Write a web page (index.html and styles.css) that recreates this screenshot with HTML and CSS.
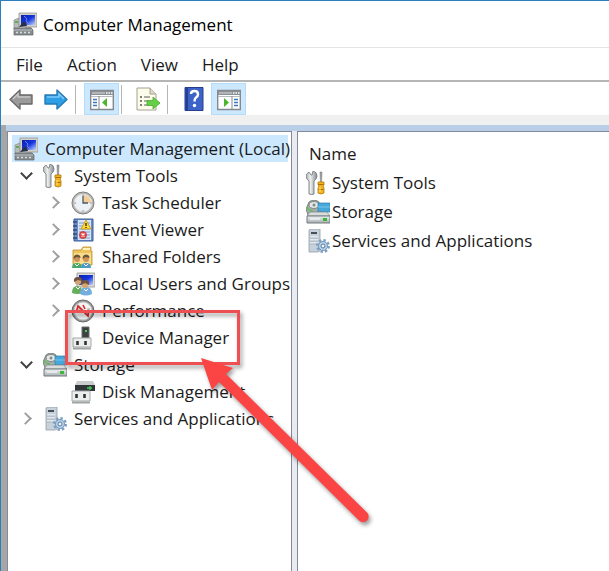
FILE: index.html
```html
<!DOCTYPE html>
<html lang="en">
<head>
    <meta charset="UTF-8">
    <meta name="viewport" content="width=device-width, initial-scale=1.0">
    <title>Computer Management</title>
    <link rel="stylesheet" href="styles.css">
</head>
<body>

<!-- Shared icons -->
<svg class="icon-defs" aria-hidden="true">
    <defs>
        <linearGradient id="metal" x1="0" x2="1">
            <stop offset="0" stop-color="#a9aeb0"/><stop offset=".4" stop-color="#eef0f0"/><stop offset="1" stop-color="#858b8e"/>
        </linearGradient>
        <linearGradient id="screen" x1="0" x2="1" y2="1">
            <stop offset="0" stop-color="#0a1fae"/><stop offset=".5" stop-color="#1534dc"/><stop offset="1" stop-color="#c4d6ff"/>
        </linearGradient>
        <linearGradient id="drive" x1="0" x2="0" y1="0" y2="1">
            <stop offset="0" stop-color="#f1f3f3"/><stop offset="1" stop-color="#a6adaf"/>
        </linearGradient>
    </defs>
    <symbol id="icon-computer" viewBox="0 0 24 24">
        <path d="M1 8l5-2v11H1z" fill="#b8bdb8" stroke="#858b86" stroke-width=".7"/>
        <path d="M2 10h3" stroke="#44a33c" stroke-width="1.5"/>
        <path d="M6 1h18v14H6z" fill="#d3d1c8" stroke="#98978f" stroke-width=".8"/>
        <path d="M8 3h14v10H8z" fill="url(#screen)"/>
        <path d="M11 4l3 3-1 2 3 3" stroke="#6f86e8" stroke-width="1" fill="none"/>
        <path d="M6 15l4-5 2-1 2 5z" fill="#26304c"/>
        <path d="M12 15h6l2 3h-9z" fill="#aaa99f"/>
        <path d="M1 16h17l2 2v5H1z" fill="#878c8e" stroke="#5f6567" stroke-width=".7"/>
        <path d="M1 18h18" stroke="#b8bdbe"/>
        <path d="M3 20.5h2m2 0h2m2 0h2m2 0h2" stroke="#d8dcdc" stroke-width="1.6"/>
    </symbol>
    <symbol id="icon-tools" viewBox="0 0 24 24">
        <path d="M3 1l2 3h1l1-4q4 1 4 5 0 3-3 5v13q-2 1-5 0V10Q0 8 0 5q0-2 3-4z" fill="url(#metal)" stroke="#777d80" stroke-width=".9"/>
        <path d="M14 1h2l-.4 10h-1.2z" fill="#9aa0a2" stroke="#777" stroke-width=".5"/>
        <path d="M12 11h6v3l-1 1 1 2v5q-3 2-6 0v-5l1-2-1-1z" fill="#f4b41c" stroke="#b17a0b" stroke-width=".8"/>
        <path d="M12.500 13.500h5m-5 5h5" stroke="#a76e00"/>
        <path d="M14 16v5" stroke="#ffe58a"/>
    </symbol>
    <symbol id="icon-clock" viewBox="0 0 24 24">
        <circle cx="12" cy="12" r="11" fill="#b5b5b3" stroke="#828282" stroke-width="1"/>
        <circle cx="12" cy="12" r="8.800" fill="#edf2f7" stroke="#dedede" stroke-width="1"/>
        <path d="M12 12V4a8 8 0 0 1 8 8z" fill="#f3cd91"/>
        <path d="M12 5v7h5" stroke="#475970" stroke-width="1.300" fill="none"/>
        <path d="M12 3.500v1.500m0 14v1.500M3.500 12H5m14 0h1.500" stroke="#7f8994"/>
    </symbol>
    <symbol id="icon-events" viewBox="0 0 24 24">
        <path d="M3 1h19v22H3z" fill="#6b8fc8" stroke="#3d5e99"/>
        <path d="M7 2h13v20H7z" fill="#d9e5f6"/>
        <path d="M8 5h11M8 8h11M8 11h11M8 14h11M8 17h11M8 20h11" stroke="#7d9bd0"/>
        <path d="M2 4h4M2 8h4M2 12h4M2 16h4M2 20h4" stroke="#344a72" stroke-width="1.500"/>
        <path d="M15 2l5 9H10z" fill="#ffd92f" stroke="#c79a06" stroke-width=".8"/>
        <path d="M15 5v3m0 1v1" stroke="#222" stroke-width="1.300"/>
        <circle cx="12" cy="17" r="3.600" fill="#e44848" stroke="#b82c2c" stroke-width=".6"/>
        <path d="M10.500 15.500l3 3m0-3l-3 3" stroke="#fff" stroke-width="1.200"/>
    </symbol>
    <symbol id="icon-folders" viewBox="0 0 24 24">
        <path d="M2 5h8l2-3h8v4h1v14H2z" fill="#efc35d" stroke="#bd8e2b" stroke-width=".8"/>
        <path d="M3 8h17v11H3z" fill="#f9dd8d"/>
        <path d="M12 3h7v2h-7z" fill="#fff2be"/>
        <path d="M1 23q0-5 5-5t5 5z" fill="#45aa69"/>
        <path d="M10 23q0-5 5-5t5 5z" fill="#499ac7"/>
        <circle cx="6" cy="14" r="3" fill="#ce925d"/>
        <circle cx="15" cy="14" r="3" fill="#ce925d"/>
        <path d="M2.500 14q0-4.500 3.500-4.500t3.500 3.500l-4-1zm9 0q0-4.500 3.500-4.500t3.500 3.500l-4-1z" fill="#6d5538"/>
        <path d="M4 19l2 2 2-2m5 0l2 2 2-2" stroke="#fff" fill="none"/>
    </symbol>
    <symbol id="icon-users" viewBox="0 0 24 24">
        <path d="M6 1h18v14H6z" fill="#dcdcd4" stroke="#92938e" stroke-width=".8"/>
        <path d="M8 3h14v10H8z" fill="url(#screen)"/>
        <path d="M1 21q0-7 5-7t6 7q-6 2-11 0z" fill="#67ae5b"/>
        <path d="M9 22q0-7 6-7t6 7q-6 3-12 0z" fill="#74aede"/>
        <circle cx="7" cy="9.500" r="3.300" fill="#d6a474"/>
        <circle cx="14" cy="12.500" r="3.400" fill="#d6a474"/>
        <path d="M3 10q-1-5 4-5t4 4L7 8zm7 3q-1-5 4-5t4 5l-4-2z" fill="#6e5440"/>
        <path d="M5 15l2 2 2-2m4 2l2 2 2-2" stroke="#fff" fill="none"/>
    </symbol>
    <symbol id="icon-performance" viewBox="0 0 24 24">
        <circle cx="12" cy="12" r="11" fill="#959595" stroke="#6c6c6c"/>
        <circle cx="12" cy="12" r="9" fill="#f2f3f3" stroke="#c6c6c6"/>
        <path d="M5 13h3V7l9 9v-6h2" stroke="#b8babc" stroke-width="1.500" fill="none"/>
        <path d="M5.500 12l1.500-5 10 10 1-6" stroke="#dd2020" stroke-width="1.600" fill="none"/>
        <path d="M12 6l2 4" stroke="#dd2020" stroke-width="1.500" fill="none"/>
    </symbol>
    <symbol id="icon-device" viewBox="0 0 24 24">
        <path d="M11 1h7v11h-7z" fill="#3d4142" stroke="#696d6e"/>
        <path d="M14 5h2" stroke="#4ed35f" stroke-width="2"/>
        <path d="M2 12h18v9H2z" fill="#eceeee" stroke="#a5a8a8"/>
        <path d="M2 22.500h18" stroke="#a0a4a4" stroke-width="2"/>
        <path d="M6.500 15v4m8-4v4" stroke="#333" stroke-width="2.600"/>
    </symbol>
    <symbol id="icon-storage" viewBox="0 0 24 24">
        <path d="M3 2q5-4 10 0l1 9-4 4H2L0 9z" fill="#a3adac" stroke="#69716f" stroke-width=".8"/>
        <ellipse cx="8" cy="5" rx="5" ry="3.500" fill="#e4e8e6" stroke="#808886"/>
        <circle cx="8" cy="5" r="1.500" fill="#828986"/>
        <path d="M1 7q2 4 6 4" stroke="#61bf50" stroke-width="1.500" fill="none"/>
        <path d="M12 3h12v9H12z" fill="#46a9dc" stroke="#347da5" stroke-width=".7"/>
        <path d="M12 7h12" stroke="#84ceef" stroke-width=".8"/>
        <path d="M4 12h17l3 4H1z" fill="#d9dddd" stroke="#7d8585" stroke-width=".7"/>
        <path d="M1 16h23v7H1z" fill="url(#drive)" stroke="#737b7c"/>
        <path d="M17 18h4v3h-4z" fill="#39b83c"/>
        <path d="M4 19h10" stroke="#fff"/>
    </symbol>
    <symbol id="icon-disk" viewBox="0 0 24 24">
        <path d="M6 1h16l2 4H4z" fill="#c9cdcd"/>
        <path d="M4 5h20v6H4z" fill="#303637"/>
        <path d="M16 8h5m-2-2v4" stroke="#46c957" stroke-width="1.300"/>
        <path d="M1 11h18v10H1z" fill="#eceeee" stroke="#a5a8a8"/>
        <path d="M1 22.500h18" stroke="#a0a4a4" stroke-width="2"/>
        <path d="M5.500 14v4m8-4v4" stroke="#333" stroke-width="2.600"/>
    </symbol>
    <symbol id="icon-services" viewBox="0 0 24 24">
        <path d="M3 1l2-1h9v22l-2 1H3z" fill="#c7d1db" stroke="#929faa" stroke-width=".8"/>
        <path d="M5 3h6v2H5z" fill="#444f58"/>
        <path d="M4 8h8M4 11h8M4 14h8" stroke="#fff"/>
        <path d="M4 9h8M4 12h8M4 15h8" stroke="#909eac" stroke-width=".6"/>
        <circle cx="17" cy="17" r="5.800" fill="none" stroke="#7f9fc2" stroke-width="2.400" stroke-dasharray="2.500 2"/>
        <circle cx="17" cy="17" r="4.500" fill="#b8d2eb" stroke="#7296ba"/>
        <circle cx="17" cy="17" r="2" fill="#f0f6fb" stroke="#58799d"/>
    </symbol>
</svg>

<div class="window">

    <header class="title-bar">
        <svg class="icon" aria-hidden="true"><use href="#icon-computer"/></svg>
        <h1>Computer Management</h1>
    </header>

    <nav class="menu-bar" aria-label="Menu">
        <button type="button">File</button>
        <button type="button">Action</button>
        <button type="button">View</button>
        <button type="button">Help</button>
    </nav>

    <!-- Toolbar -->
    <div class="toolbar" role="toolbar" aria-label="Tools">
        <button type="button" aria-label="Back">
            <svg class="icon" viewBox="0 0 24 24"><path d="M1 12.500L11 3v5h12v9H11v5z" fill="#9b9b9b" stroke="#696969" stroke-width="1.400" stroke-linejoin="round"/><path d="M4 12l5-5v3h12" stroke="#c8c8c8" stroke-width="1.500" fill="none"/></svg>
        </button>
        <button type="button" aria-label="Forward">
            <svg class="icon" viewBox="0 0 24 24"><path d="M23 12.500L13 3v5H1v9h12v5z" fill="#2e9fe6" stroke="#2779b4" stroke-width="1.400" stroke-linejoin="round"/><path d="M3 10h12V7l5 5" stroke="#80ccf7" stroke-width="1.500" fill="none"/></svg>
        </button>
        <span class="separator"></span>
        <button type="button" class="pressed" aria-pressed="true" aria-label="Show/Hide Console Tree">
            <svg class="icon" viewBox="0 0 24 24"><path d="M.7 3.500h22.600v19H.7z" fill="#fff" stroke="#85898c" stroke-width="1.400"/><path d="M1 4h22v4H1z" fill="#8b9094"/><path d="M2 6h13" stroke="#d8dbdd"/><path d="M16 6h1.500m1 0H20m1 0h1.500" stroke="#fff" stroke-width="1.500"/><path d="M1 9.500h22" stroke="#b8bcbf"/><path d="M9 9v13" stroke="#85898c"/><path d="M3 12.500h4M3 15.500h4M3 18.500h4" stroke="#3c78bb" stroke-width="1.600"/><path d="M17 11v9l-5-4.500z" fill="#4bb52b"/></svg>
        </button>
        <span class="separator"></span>
        <button type="button" aria-label="Export List">
            <svg class="icon" viewBox="0 0 24 24"><path d="M1 1h13l6 6v16H1z" fill="#fdfbea" stroke="#a5a292"/><path d="M14 1v6h6" fill="#ddd9c3" stroke="#a5a292"/><path d="M4 10h2m-2 4h2m-2 4h2" stroke="#555" stroke-width="1.500"/><path d="M8 10h6m-6 4h5m-5 4h6" stroke="#5c5f5c"/><path d="M11 13.500h6V10l7 6-7 6v-3.500h-6z" fill="#65cf45" stroke="#48a932" stroke-width=".8"/></svg>
        </button>
        <span class="separator"></span>
        <button type="button" aria-label="Help topics">
            <svg class="icon" viewBox="0 0 24 24"><path d="M3 .5h18v23H3z" fill="#3d62c8" stroke="#263f8c"/><path d="M3.500 1H6v22H3.500z" fill="#243d96"/><path d="M9 7q0-3 3.500-3T16 7.200q0 2-2 3.400-1.500 1-1.500 4" stroke="#fff" stroke-width="2.400" fill="none"/><circle cx="12.500" cy="18.500" r="1.700" fill="#fff"/></svg>
        </button>
        <button type="button" class="pressed" aria-pressed="true" aria-label="Show/Hide Action Pane">
            <svg class="icon" viewBox="0 0 24 24"><path d="M.7 3.500h22.600v19H.7z" fill="#fff" stroke="#85898c" stroke-width="1.400"/><path d="M1 4h22v4H1z" fill="#8b9094"/><path d="M2 6h13" stroke="#d8dbdd"/><path d="M16 6h1.500m1 0H20m1 0h1.500" stroke="#fff" stroke-width="1.500"/><path d="M1 9.500h22" stroke="#b8bcbf"/><path d="M15 9v13" stroke="#85898c"/><path d="M17 12.500h4m-4 3h4m-4 3h4" stroke="#3c78bb" stroke-width="1.600"/><path d="M7 11v9l5-4.500z" fill="#4bb52b"/></svg>
        </button>
    </div>

    <main class="panes">
        <!-- Console tree -->
        <section class="pane tree-pane" aria-label="Console tree">
            <ul class="tree">
                <li>
                    <div class="row root selected"><svg class="icon" aria-hidden="true"><use href="#icon-computer"/></svg><span>Computer Management (Local)</span></div>
                    <ul>
                        <li>
                            <div class="row"><button type="button" class="twisty open" aria-expanded="true" aria-label="Collapse System Tools"></button><svg class="icon" aria-hidden="true"><use href="#icon-tools"/></svg><span>System Tools</span></div>
                            <ul>
                                <li class="row"><button type="button" class="twisty" aria-expanded="false" aria-label="Expand Task Scheduler"></button><svg class="icon" aria-hidden="true"><use href="#icon-clock"/></svg><span>Task Scheduler</span></li>
                                <li class="row"><button type="button" class="twisty" aria-expanded="false" aria-label="Expand Event Viewer"></button><svg class="icon" aria-hidden="true"><use href="#icon-events"/></svg><span>Event Viewer</span></li>
                                <li class="row"><button type="button" class="twisty" aria-expanded="false" aria-label="Expand Shared Folders"></button><svg class="icon" aria-hidden="true"><use href="#icon-folders"/></svg><span>Shared Folders</span></li>
                                <li class="row"><button type="button" class="twisty" aria-expanded="false" aria-label="Expand Local Users and Groups"></button><svg class="icon" aria-hidden="true"><use href="#icon-users"/></svg><span>Local Users and Groups</span></li>
                                <li class="row"><button type="button" class="twisty" aria-expanded="false" aria-label="Expand Performance"></button><svg class="icon" aria-hidden="true"><use href="#icon-performance"/></svg><span>Performance</span></li>
                                <li class="row leaf"><svg class="icon" aria-hidden="true"><use href="#icon-device"/></svg><span>Device Manager</span></li>
                            </ul>
                        </li>
                        <li>
                            <div class="row"><button type="button" class="twisty open" aria-expanded="true" aria-label="Collapse Storage"></button><svg class="icon" aria-hidden="true"><use href="#icon-storage"/></svg><span>Storage</span></div>
                            <ul>
                                <li class="row leaf"><svg class="icon" aria-hidden="true"><use href="#icon-disk"/></svg><span>Disk Management</span></li>
                            </ul>
                        </li>
                        <li class="row"><button type="button" class="twisty" aria-expanded="false" aria-label="Expand Services and Applications"></button><svg class="icon" aria-hidden="true"><use href="#icon-services"/></svg><span>Services and Applications</span></li>
                    </ul>
                </li>
            </ul>
        </section>

        <!-- Contents of the selected node -->
        <section class="pane list-pane">
            <table class="list">
                <thead>
                    <tr><th scope="col">Name</th></tr>
                </thead>
                <tbody>
                    <tr><td><div class="cell"><svg class="icon" aria-hidden="true"><use href="#icon-tools"/></svg>System Tools</div></td></tr>
                    <tr><td><div class="cell"><svg class="icon" aria-hidden="true"><use href="#icon-storage"/></svg>Storage</div></td></tr>
                    <tr><td><div class="cell"><svg class="icon" aria-hidden="true"><use href="#icon-services"/></svg>Services and Applications</div></td></tr>
                </tbody>
            </table>
        </section>
    </main>

    <!-- Callout pointing at Device Manager -->
    <svg class="callout" width="400" height="540" aria-hidden="true">
        <rect x="66.500" y="311.500" width="172" height="52" fill="none" stroke="#ee4f53" stroke-width="3"/>
        <path d="M201 358l32 10-7 6 141 138.500a5.500 5.500 0 0 1-8 8L219 382l-7 8z" fill="#fb4545"/>
    </svg>

</div>

</body>
</html>
```
FILE: styles.css
```css
* {
    box-sizing: border-box;
}

body {
    margin: 0;
    background-color: #fff;
    color: #1b1b1b;
    font-family: "Open Sans", "Noto Sans", sans-serif;
    font-size: 17px;
    line-height: 27px;
}

button {
    border: 0;
    padding: 0;
    background: none;
    color: inherit;
    font: inherit;
}

.icon-defs {
    position: absolute;
    width: 0;
    height: 0;
}

.icon {
    flex: none;
    width: 24px;
    height: 24px;
}

.window {
    position: relative;
    display: flex;
    flex-direction: column;
    min-height: 100vh;
    border: solid #2b7fbd;
    border-width: 1px 0 0 1px;
}

/* Title and menu */
.title-bar {
    display: flex;
    align-items: center;
    gap: 6px;
    height: 47px;
    padding-left: 12px;
    border-bottom: 1px solid #e4e4e4;
}

h1 {
    margin: 0;
    font-size: 17px;
    font-weight: normal;
    color: #000;
}

.menu-bar {
    display: flex;
    align-items: center;
    gap: 24px;
    height: 34px;
    padding-left: 15px;
    border-bottom: 2px solid #b5b5b5;
}

/* Toolbar */
.toolbar {
    display: flex;
    height: 33px;
    padding: 1px 0 0 2px;
}

.toolbar button {
    display: flex;
    align-items: center;
    justify-content: center;
    width: 35px;
}

.toolbar .pressed {
    border: 1px solid #b5dcf8;
    background-color: #cce8ff;
}

.separator {
    width: 1px;
    margin: 2px 8px 1px 2px;
    background-color: #b5b5b5;
}

/* Panes */
.panes {
    display: flex;
    flex: 1;
    gap: 5px;
    padding-left: 6px;
    border-top: 10px solid #f0f0f0;
    background: linear-gradient(#b9cfe8 6px, transparent 6px) 5px 0 no-repeat,
        linear-gradient(90deg, #a6a6a6 6px, #e9ebf0 6px);
}

.pane {
    margin-top: 6px;
    border: solid #83889a;
    border-width: 1px 1px 0;
    background-color: #fff;
}

.tree-pane {
    flex: none;
    width: 285px;
    padding: 3px 3px 0 4px;
}

.list-pane {
    flex: 1;
    border-right: 0;
    padding: 6px 8px 0;
}

/* Tree */
.tree,
.tree ul {
    margin: 0;
    padding: 0;
    list-style: none;
}

.tree ul ul {
    padding-left: 28px;
}

.row {
    display: flex;
    align-items: center;
    height: 27px;
    white-space: nowrap;
}

.row .icon {
    margin: 0 7px 0 3px;
}

.row.root .icon {
    margin-left: 2px;
}

.row.selected {
    background-color: #cce8ff;
}

.row.leaf {
    padding-left: 28px;
}

.twisty {
    display: flex;
    flex: none;
    align-items: center;
    justify-content: center;
    width: 28px;
    height: 27px;
}

.twisty::before {
    content: "";
    width: 7px;
    height: 7px;
    margin-right: 2px;
    border: solid #a0a0a0;
    border-width: 2px 2px 0 0;
    transform: rotate(45deg);
}

.twisty.open::before {
    margin: 0 0 4px;
    border-color: #404040;
    transform: rotate(135deg);
}

/* List */
.list {
    border-collapse: collapse;
}

.list th {
    height: 30px;
    padding: 0 3px;
    font-weight: normal;
    text-align: left;
}

.list td {
    padding: 0;
}

.cell {
    display: flex;
    align-items: center;
    gap: 2px;
    height: 29px;
}

.callout {
    position: absolute;
    top: -1px;
    left: -1px;
    pointer-events: none;
    filter: drop-shadow(2px 3px 2px rgba(0, 0, 0, 0.4));
}
```
